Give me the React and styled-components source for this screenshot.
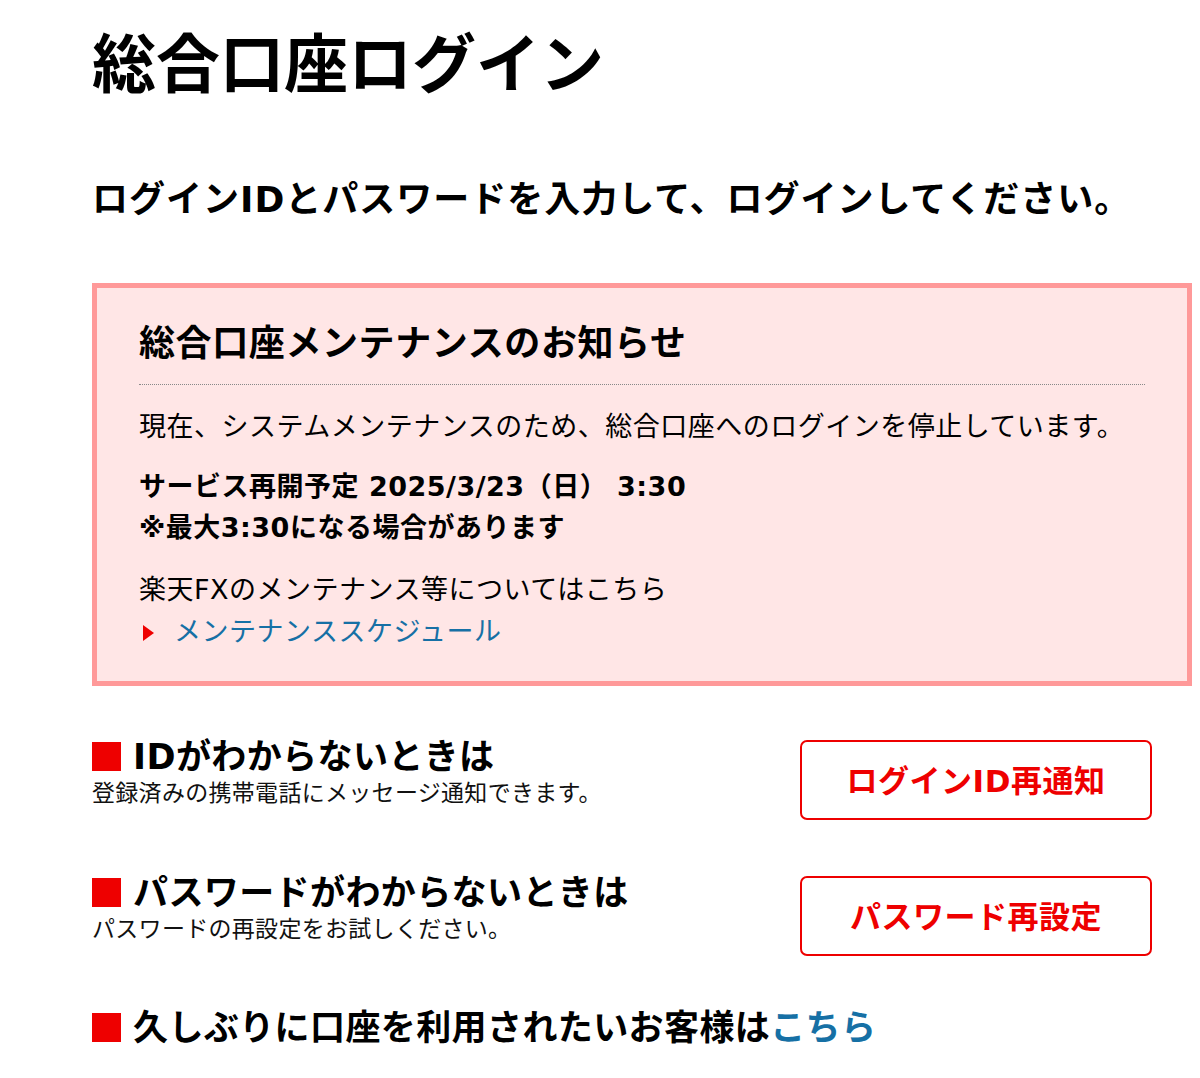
import React from "react";
import styled, { createGlobalStyle } from "styled-components";

const GlobalStyle = createGlobalStyle`
  html, body { margin: 0; padding: 0; background: #fff; }
  body {
    font-family: "DejaVu Sans", "Noto Sans CJK JP", "Noto Sans", sans-serif;
    color: #000;
  }
`;

const Page = styled.main`
  width: 1100px;
  padding: 27px 0 40px 92px;
  box-sizing: content-box;
`;

const Title = styled.h1`
  margin: 0;
  font-size: 64px;
  line-height: 1.2;
  font-weight: 700;
`;

const Lead = styled.p`
  margin: 74px 0 0;
  font-size: 36px;
  line-height: 1.2;
  font-weight: 700;
  letter-spacing: 1px;
`;

const Notice = styled.section`
  margin-top: 62px;
  background: #ffe6e6;
  border: 5px solid #ff9999;
  padding: 34px 42px 29px;
`;

const NoticeTitle = styled.h2`
  margin: 0;
  font-size: 36px;
  line-height: 1.2;
  font-weight: 700;
  letter-spacing: 0.6px;
  padding-bottom: 19px;
  border-bottom: 1px dotted #888;
`;

const NoticeText = styled.p`
  margin: ${(p) => p.$mt || 0}px 0 0;
  font-size: 27px;
  line-height: 41px;
  letter-spacing: 0.5px;
  font-weight: ${(p) => (p.$bold ? 700 : 400)};
`;

const ArrowLink = styled.a`
  margin-top: 1px;
  display: flex;
  align-items: center;
  gap: 20px;
  font-size: 27px;
  line-height: 41px;
  letter-spacing: 0.5px;
  color: #1670a5;
  text-decoration: none;
  &::before {
    content: "";
    margin-left: 4px;
    margin-top: 3px;
    width: 0;
    height: 0;
    border-top: 8px solid transparent;
    border-bottom: 8px solid transparent;
    border-left: 11px solid #ee0000;
  }
`;

const HelpRow = styled.div`
  display: flex;
  justify-content: space-between;
  align-items: flex-start;
  padding-right: 40px;
  margin-top: ${(p) => p.$mt}px;
`;

const HelpText = styled.div`
  display: flex;
  flex-direction: column;
  padding-top: 3px;
`;

const HelpTitle = styled.h3`
  margin: 0;
  display: flex;
  align-items: center;
  gap: 12px;
  font-size: 35px;
  line-height: 41px;
  letter-spacing: 0.4px;
  font-weight: 700;
  &::before {
    content: "";
    flex: none;
    width: 29px;
    height: 29px;
    margin-top: -3px;
    background: #ee0000;
  }
`;

const HelpLink = styled.a`
  color: #1670a5;
  text-decoration: none;
`;

const HelpNote = styled.p`
  margin: 0;
  font-size: 23px;
  line-height: 30px;
  letter-spacing: 0.3px;
  font-weight: 400;
  color: #111;
`;

const RedButton = styled.a`
  margin-top: 6px;
  width: 352px;
  height: 80px;
  box-sizing: border-box;
  padding-bottom: 4px;
  border: 2px solid #ee0000;
  border-radius: 7px;
  background: #fff;
  color: #ee0000;
  font-size: 31px;
  font-weight: 700;
  letter-spacing: 0.5px;
  display: flex;
  align-items: center;
  justify-content: center;
  text-decoration: none;
`;

export default function App() {
  return (
    <>
      <GlobalStyle />
      <Page>
        <Title>総合口座ログイン</Title>
        <Lead>ログインIDとパスワードを入力して、ログインしてください。</Lead>
        <Notice>
          <NoticeTitle>総合口座メンテナンスのお知らせ</NoticeTitle>
          <NoticeText $mt={21}>
            現在、システムメンテナンスのため、総合口座へのログインを停止しています。
          </NoticeText>
          <NoticeText $mt={19} $bold>
            サービス再開予定 2025/3/23（日） 3:30
            <br />
            ※最大3:30になる場合があります
          </NoticeText>
          <NoticeText $mt={21}>楽天FXのメンテナンス等についてはこちら</NoticeText>
          <ArrowLink href="#">メンテナンススケジュール</ArrowLink>
        </Notice>

        <HelpRow $mt={48}>
          <HelpText>
            <HelpTitle>IDがわからないときは</HelpTitle>
            <HelpNote>登録済みの携帯電話にメッセージ通知できます。</HelpNote>
          </HelpText>
          <RedButton href="#">ログインID再通知</RedButton>
        </HelpRow>

        <HelpRow $mt={50}>
          <HelpText>
            <HelpTitle>パスワードがわからないときは</HelpTitle>
            <HelpNote>パスワードの再設定をお試しください。</HelpNote>
          </HelpText>
          <RedButton href="#">パスワード再設定</RedButton>
        </HelpRow>

        <HelpRow $mt={52}>
          <HelpTitle>
            <span>
              久しぶりに口座を利用されたいお客様は<HelpLink href="#">こちら</HelpLink>
            </span>
          </HelpTitle>
        </HelpRow>
      </Page>
    </>
  );
}
